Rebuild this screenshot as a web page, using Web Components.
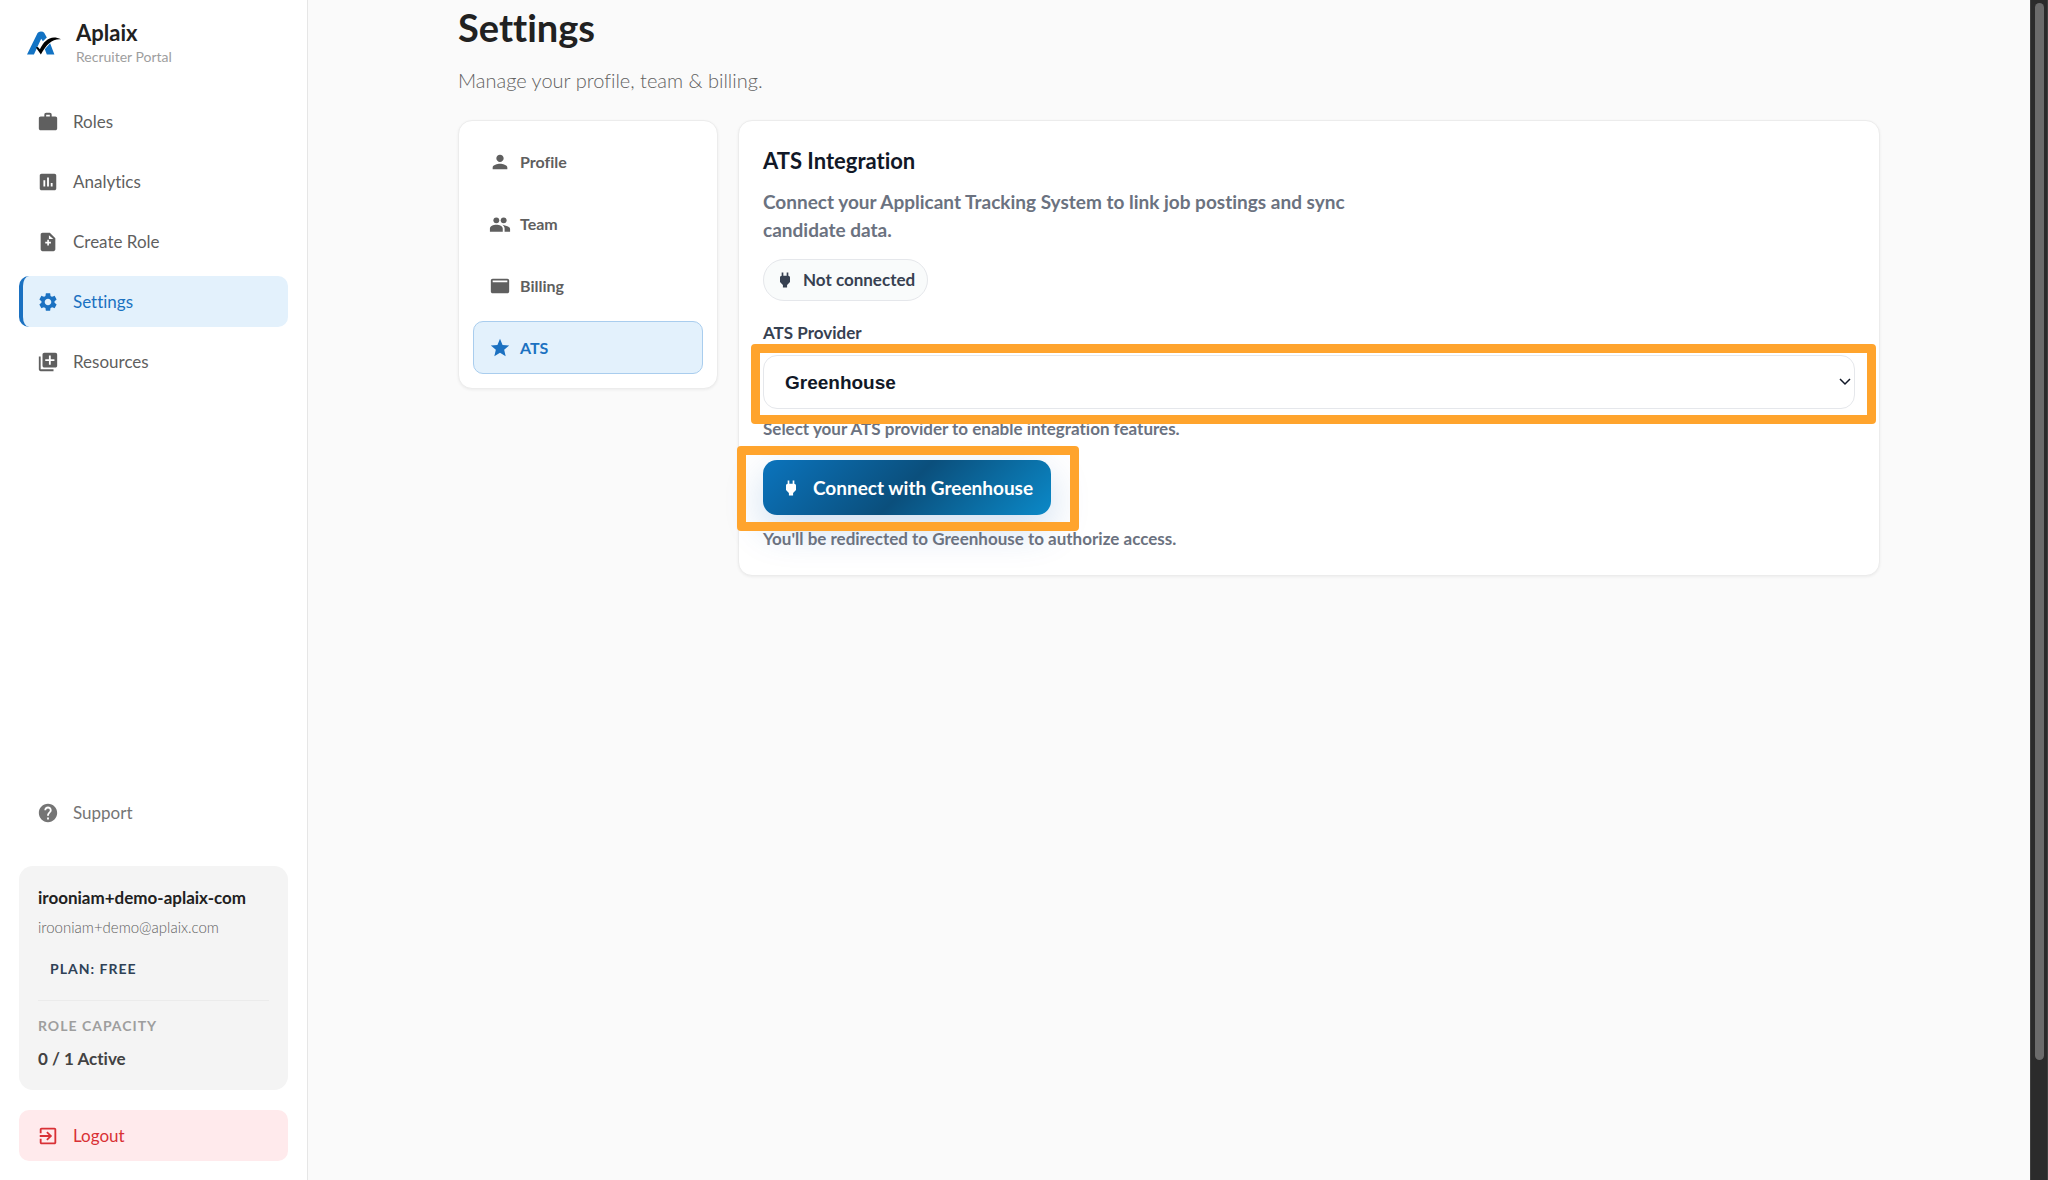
<!DOCTYPE html>
<html lang="en">
<head>
<meta charset="UTF-8">
<meta name="viewport" content="width=device-width, initial-scale=1">
<title>Aplaix - Settings</title>
<style>
  :root {
    --bg: #fafafa;
    --surface: #ffffff;
    --line: #ececec;
    --blue: #1b71c1;
    --blue-light: #e3f1fc;
    --grey: #5f5f5f;
    --ink: #111827;
    --slate: #374151;
    --muted: #6b7280;
    --mark: #ffa42d;
  }
  body {
    margin: 0;
    background: var(--bg);
    font-family: Lato, "Open Sans", sans-serif;
    font-size: 17px;
    line-height: 24px;
    font-variant-ligatures: none;
  }
</style>
</head>
<body>
<app-shell>
  <side-bar slot="side">
    <nav-item icon="work" href="#roles">Roles</nav-item>
    <nav-item icon="chart" href="#analytics">Analytics</nav-item>
    <nav-item icon="note" href="#create">Create Role</nav-item>
    <nav-item icon="gear" href="#settings" active>Settings</nav-item>
    <nav-item icon="library" href="#resources">Resources</nav-item>
    <nav-item slot="bottom" icon="help" href="#support" soft>Support</nav-item>
    <account-card slot="bottom">
      <span slot="name">irooniam+demo-aplaix-com</span>
      <span slot="email">irooniam+demo@aplaix.com</span>
      <span slot="plan">PLAN: FREE</span>
      <span slot="usage">0 / 1 Active</span>
    </account-card>
    <logout-button slot="bottom">Logout</logout-button>
  </side-bar>
  <settings-page>
    <settings-menu slot="menu">
      <menu-item icon="person" href="#profile">Profile</menu-item>
      <menu-item icon="people" href="#team">Team</menu-item>
      <menu-item icon="billing" href="#billing">Billing</menu-item>
      <menu-item icon="star" href="#ats" active>ATS</menu-item>
    </settings-menu>
    <ats-panel></ats-panel>
  </settings-page>
</app-shell>

<script>
const ICONS = {
  work: '<path d="M20 6h-4V4c0-1.11-.89-2-2-2h-4c-1.11 0-2 .89-2 2v2H4c-1.11 0-1.99.89-1.99 2L2 19c0 1.11.89 2 2 2h16c1.11 0 2-.89 2-2V8c0-1.11-.89-2-2-2zm-6 0h-4V4h4v2z"/>',
  chart: '<path d="M19 3H5c-1.1 0-2 .9-2 2v14c0 1.1.9 2 2 2h14c1.1 0 2-.9 2-2V5c0-1.1-.9-2-2-2zM9 17H7v-7h2v7zm4 0h-2V7h2v10zm4 0h-2v-4h2v4z"/>',
  note: '<path fill-rule="evenodd" d="M14 2H6c-1.1 0-2 .9-2 2v16c0 1.1.9 2 2 2h12c1.1 0 2-.9 2-2V8l-6-6zM13 4.500V8.700h4.800zM11.200 9.500h1.800v2.200h2.200v1.800h-2.200v2.200h-1.800v-2.200H9v-1.800h2.200z"/>',
  gear: '<path d="M19.140 12.940c.04-.3.06-.61.06-.94 0-.32-.02-.64-.07-.94l2.030-1.580c.18-.14.23-.41.12-.61l-1.920-3.320c-.12-.22-.37-.29-.59-.22l-2.390.96c-.5-.38-1.030-.7-1.620-.94l-.36-2.540c-.04-.24-.24-.41-.48-.41h-3.840c-.24 0-.43.17-.47.41l-.36 2.540c-.59.24-1.130.57-1.620.94l-2.390-.96c-.22-.08-.47 0-.59.22L2.740 8.870c-.12.21-.08.47.12.61l2.030 1.580c-.05.3-.09.63-.09.94s.02.64.07.94l-2.030 1.580c-.18.14-.23.41-.12.61l1.920 3.320c.12.22.37.29.59.22l2.390-.96c.5.38 1.030.7 1.620.94l.36 2.540c.05.24.24.41.48.41h3.840c.24 0 .44-.17.47-.41l.36-2.540c.59-.24 1.130-.56 1.620-.94l2.390.96c.22.08.47 0 .59-.22l1.920-3.320c.12-.22.07-.47-.12-.61l-2.010-1.580zM12 15.600c-1.980 0-3.600-1.620-3.600-3.600s1.620-3.600 3.600-3.600 3.600 1.620 3.600 3.600-1.620 3.600-3.600 3.600z"/>',
  library: '<path d="M4 6H2v14c0 1.100.9 2 2 2h14v-2H4V6zm16-4H8c-1.100 0-2 .9-2 2v12c0 1.100.9 2 2 2h12c1.100 0 2-.9 2-2V4c0-1.100-.9-2-2-2zm-1 9h-4v4h-2v-4H9V9h4V5h2v4h4v2z"/>',
  help: '<path d="M12 2C6.480 2 2 6.480 2 12s4.480 10 10 10 10-4.480 10-10S17.520 2 12 2zm1 17h-2v-2h2v2zm2.070-7.750l-.9.920C13.450 12.900 13 13.500 13 15h-2v-.5c0-1.100.45-2.100 1.170-2.830l1.240-1.260c.37-.36.59-.86.59-1.410 0-1.100-.9-2-2-2s-2 .9-2 2H8c0-2.210 1.790-4 4-4s4 1.790 4 4c0 .88-.36 1.680-.93 2.250z"/>',
  exit: '<path d="M10.090 15.590L11.500 17l5-5-5-5-1.410 1.410L12.670 11H3v2h9.670l-2.580 2.590zM19 3H5c-1.110 0-2 .9-2 2v4h2V5h14v14H5v-4H3v4c0 1.100.89 2 2 2h14c1.100 0 2-.9 2-2V5c0-1.100-.9-2-2-2z"/>',
  person: '<path d="M12 12c2.210 0 4-1.790 4-4s-1.790-4-4-4-4 1.790-4 4 1.790 4 4 4zm0 2c-2.670 0-8 1.340-8 4v2h16v-2c0-2.660-5.330-4-8-4z"/>',
  people: '<circle cx="8" cy="8" r="3.200"/><circle cx="16" cy="8" r="3.200"/><path d="M1 20.500V17c0-2.600 3.600-4.200 7-4.200s7 1.600 7 4.200v3.500zM17 20.500V17c0-1.800-.9-3.200-2.400-4.300 3.600 1.200 8.400 1.800 8.400 4.800v3z"/>',
  billing: '<path fill-rule="evenodd" d="M20 4H4c-1.100 0-2 .9-2 2v12c0 1.100.9 2 2 2h16c1.100 0 2-.9 2-2V6c0-1.100-.9-2-2-2zm0 4H4V6h16z"/>',
  star: '<path d="M12 17.270L18.180 21l-1.640-7.030L22 9.240l-7.190-.61L12 2 9.190 8.630 2 9.240l5.460 4.730L5.820 21z"/>',
  plug: '<path d="M16.010 7L16 3h-2v4h-4V3H8v4h-.01C7 6.990 6 7.990 6 8.990v5.490L9.500 18v3h5v-3l3.500-3.510v-5.500c0-1-1-2-1.990-1.990z"/>'
};

class BaseElement extends HTMLElement {
  constructor() {
    super();
    this.attachShadow({ mode: 'open' });
  }
  connectedCallback() {
    this.shadowRoot.innerHTML = this.render();
  }
}

class AppIcon extends BaseElement {
  render() {
    return `
      <style>
        :host { display: block; flex: none; width: 22px; height: 22px; }
        svg { display: block; width: 100%; height: 100%; fill: currentColor; }
      </style>
      <svg viewBox="0 0 24 24" aria-hidden="true">${ICONS[this.getAttribute('name')]}</svg>
    `;
  }
}

class AppShell extends BaseElement {
  render() {
    return `
      <style>
        :host {
          display: grid;
          grid-template-columns: 308px 1fr 18px;
          height: 100vh;
        }
        main { min-width: 0; overflow: hidden; }
      </style>
      <slot name="side"></slot>
      <main><slot></slot></main>
      <scroll-track></scroll-track>
    `;
  }
}

class ScrollTrack extends BaseElement {
  render() {
    return `
      <style>
        :host {
          display: block;
          box-sizing: border-box;
          padding: 3px 3px 3px 4px;
          background: #2b2b2b;
          border-left: 1px solid #404040;
          border-right: 1px solid #404040;
        }
        div { height: 90%; border-radius: 5px; background: #6b6b6b; }
      </style>
      <div></div>
    `;
  }
}

class BrandMark extends BaseElement {
  render() {
    return `
      <style>
        :host { display: flex; align-items: center; gap: 15px; padding: 0 8px; }
        svg { display: block; width: 34px; height: 24px; }
        strong { display: block; font-size: 22px; line-height: 28px; color: #212121; }
        small { display: block; font-size: 14px; line-height: 20px; color: #9e9e9e; }
      </style>
      <svg viewBox="0 0 103 70" aria-hidden="true">
        <path fill="#1273c4" d="M0 70L32 5Q35 0 42 0Q49 0 52 4L60 18L48 30L43 22L21 70zM70 36L83 70H60L54 54z"/>
        <path fill="#000" d="M27 49L33 47L39 54C52 26 74 8 103 24C76 22 60 38 42 70z"/>
      </svg>
      <div><strong>Aplaix</strong><small>Recruiter Portal</small></div>
    `;
  }
}

class SideBar extends BaseElement {
  render() {
    return `
      <style>
        :host {
          display: flex;
          flex-direction: column;
          box-sizing: border-box;
          padding: 19px;
          background: var(--surface);
          border-right: 1px solid #e6e6e6;
        }
        nav { display: flex; flex-direction: column; gap: 9px; margin-top: 29px; }
        .bottom { display: flex; flex-direction: column; gap: 20px; margin-top: auto; }
        ::slotted(account-card) { margin-top: 8px; }
      </style>
      <brand-mark></brand-mark>
      <nav><slot></slot></nav>
      <div class="bottom"><slot name="bottom"></slot></div>
    `;
  }
}

class NavItem extends BaseElement {
  render() {
    return `
      <style>
        :host { display: block; color: var(--grey); }
        :host([soft]) { color: #757575; }
        :host([active]) { color: var(--blue); }
        a {
          display: flex;
          align-items: center;
          gap: 14px;
          box-sizing: border-box;
          height: 51px;
          padding: 0 14px;
          border-left: 4px solid transparent;
          border-radius: 10px;
          color: inherit;
          text-decoration: none;
        }
        :host([active]) a { background: var(--blue-light); border-left-color: var(--blue); }
      </style>
      <a href="${this.getAttribute('href')}">
        <app-icon name="${this.getAttribute('icon')}"></app-icon>
        <span><slot></slot></span>
      </a>
    `;
  }
}

class AccountCard extends BaseElement {
  render() {
    return `
      <style>
        :host {
          display: flex;
          flex-direction: column;
          padding: 19px;
          border-radius: 14px;
          background: #f4f4f4;
        }
        .name { font-weight: 700; color: #212121; line-height: 26px; }
        .email { margin-top: 4px; font-size: 15px; font-weight: 300; color: #616161; }
        .plan {
          margin: 20px 12px 0;
          font-size: 14px;
          line-height: 20px;
          font-weight: 700;
          letter-spacing: 1px;
          color: #2f4156;
        }
        .usage { margin-top: 21px; padding-top: 14px; border-top: 1px solid #ebebeb; }
        h2 { margin: 0; font-size: 14px; line-height: 22px; letter-spacing: 1px; color: #9e9e9e; }
        p { margin: 10px 0 0; font-weight: 700; color: #424242; }
      </style>
      <div class="name"><slot name="name"></slot></div>
      <div class="email"><slot name="email"></slot></div>
      <div class="plan"><slot name="plan"></slot></div>
      <div class="usage">
        <h2>ROLE CAPACITY</h2>
        <p><slot name="usage"></slot></p>
      </div>
    `;
  }
}

class LogoutButton extends BaseElement {
  render() {
    return `
      <style>
        :host { display: block; }
        button {
          display: flex;
          align-items: center;
          gap: 14px;
          width: 100%;
          height: 51px;
          padding: 0 18px;
          border: 0;
          border-radius: 10px;
          background: #ffeaec;
          color: #d93035;
          font: inherit;
          cursor: pointer;
        }
      </style>
      <button type="button"><app-icon name="exit"></app-icon><span><slot></slot></span></button>
    `;
  }
}

class SettingsPage extends BaseElement {
  render() {
    return `
      <style>
        :host { display: block; max-width: 1422px; margin: 0 auto; }
        h1 { margin: 0; padding-top: 3px; font-size: 38px; line-height: 48px; color: #212121; }
        .sub { margin: 16px 0 0; font-size: 20px; line-height: 26px; font-weight: 300; color: #616161; }
        .columns {
          display: grid;
          grid-template-columns: 260px 1fr;
          align-items: start;
          gap: 20px;
          margin-top: 27px;
        }
      </style>
      <h1>Settings</h1>
      <p class="sub">Manage your profile, team &amp; billing.</p>
      <div class="columns">
        <slot name="menu"></slot>
        <slot></slot>
      </div>
    `;
  }
}

class SettingsMenu extends BaseElement {
  render() {
    return `
      <style>
        :host {
          display: flex;
          flex-direction: column;
          gap: 9px;
          padding: 14px;
          background: var(--surface);
          border: 1px solid var(--line);
          border-radius: 14px;
          box-shadow: 0 1px 3px rgba(0, 0, 0, 0.06);
        }
      </style>
      <slot></slot>
    `;
  }
}

class MenuItem extends BaseElement {
  render() {
    return `
      <style>
        :host { display: block; color: var(--grey); }
        :host([active]) { color: var(--blue); }
        a {
          display: flex;
          align-items: center;
          gap: 9px;
          box-sizing: border-box;
          height: 53px;
          padding: 0 15px;
          border: 1px solid transparent;
          border-radius: 10px;
          color: inherit;
          font-size: 16px;
          font-weight: 700;
          text-decoration: none;
        }
        :host([active]) a { background: var(--blue-light); border-color: #a9cdee; }
      </style>
      <a href="${this.getAttribute('href')}">
        <app-icon name="${this.getAttribute('icon')}"></app-icon>
        <span><slot></slot></span>
      </a>
    `;
  }
}

// Orange frame laid over whatever it wraps
class MarkFrame extends BaseElement {
  render() {
    return `
      <style>
        :host { display: block; position: relative; }
        div {
          position: absolute;
          z-index: 2;
          inset: var(--frame-inset);
          border: 9px solid var(--mark);
          border-radius: 4px;
          pointer-events: none;
        }
      </style>
      <slot></slot>
      <div></div>
    `;
  }
}

class AtsPanel extends BaseElement {
  render() {
    return `
      <style>
        :host {
          display: flex;
          flex-direction: column;
          align-items: flex-start;
          padding: 24px;
          background: var(--surface);
          border: 1px solid var(--line);
          border-radius: 14px;
          box-shadow: 0 1px 3px rgba(0, 0, 0, 0.06);
          color: var(--muted);
          font-weight: 700;
        }
        h2 { margin: 0; font-size: 22px; line-height: 32px; color: var(--ink); }
        .desc { max-width: 624px; margin: 11px 0 0; font-size: 19px; line-height: 28px; }
        .badge {
          display: flex;
          align-items: center;
          gap: 8px;
          box-sizing: border-box;
          height: 42px;
          margin-top: 15px;
          padding: 0 12px 0 11px;
          border: 1px solid #e5e7eb;
          border-radius: 21px;
          background: #f9fbfb;
          color: var(--slate);
        }
        .badge app-icon, button app-icon { width: 20px; height: 20px; }
        label { margin-top: 20px; line-height: 24px; color: var(--slate); }
        mark-frame.field { align-self: stretch; margin-top: 10px; --frame-inset: -11px -21px -15px -12px; }
        select {
          display: block;
          appearance: none;
          width: 100%;
          height: 54px;
          padding: 0 40px 0 21px;
          border: 1px solid #e5e7eb;
          border-radius: 14px;
          background: var(--surface);
          color: var(--ink);
          font: 700 19px "Liberation Sans", sans-serif;
        }
        .arrow {
          position: absolute;
          top: 23px;
          right: 4px;
          width: 12px;
          height: 8px;
          pointer-events: none;
        }
        .hint { margin: 8px 0 0; line-height: 24px; }
        mark-frame.action { margin-top: 19px; --frame-inset: -14px -28px -16px -26px; }
        button {
          display: flex;
          align-items: center;
          gap: 12px;
          height: 55px;
          padding: 0 18px;
          border: 0;
          border-radius: 14px;
          background: linear-gradient(135deg, #0b74bd, #0b4f7c 50%, #0b89c8);
          box-shadow: 0 14px 40px rgba(11, 90, 180, 0.2);
          color: #fff;
          font: inherit;
          font-size: 19px;
          cursor: pointer;
        }
        .hint.last { margin-top: 12px; position: relative; }
      </style>
      <h2>ATS Integration</h2>
      <p class="desc">Connect your Applicant Tracking System to link job postings and sync candidate data.</p>
      <div class="badge"><app-icon name="plug"></app-icon><span>Not connected</span></div>
      <label for="provider">ATS Provider</label>
      <mark-frame class="field">
        <select id="provider"><option>Greenhouse</option></select>
        <svg class="arrow" viewBox="0 0 12 8" aria-hidden="true"><path d="M1 1l5 5 5-5" fill="none" stroke="#111827" stroke-width="1.500"/></svg>
      </mark-frame>
      <p class="hint">Select your ATS provider to enable integration features.</p>
      <mark-frame class="action">
        <button type="button"><app-icon name="plug"></app-icon><span>Connect with Greenhouse</span></button>
      </mark-frame>
      <p class="hint last">You'll be redirected to Greenhouse to authorize access.</p>
    `;
  }
}

customElements.define('app-icon', AppIcon);
customElements.define('scroll-track', ScrollTrack);
customElements.define('brand-mark', BrandMark);
customElements.define('side-bar', SideBar);
customElements.define('nav-item', NavItem);
customElements.define('account-card', AccountCard);
customElements.define('logout-button', LogoutButton);
customElements.define('mark-frame', MarkFrame);
customElements.define('settings-menu', SettingsMenu);
customElements.define('menu-item', MenuItem);
customElements.define('ats-panel', AtsPanel);
customElements.define('settings-page', SettingsPage);
customElements.define('app-shell', AppShell);
</script>
</body>
</html>
